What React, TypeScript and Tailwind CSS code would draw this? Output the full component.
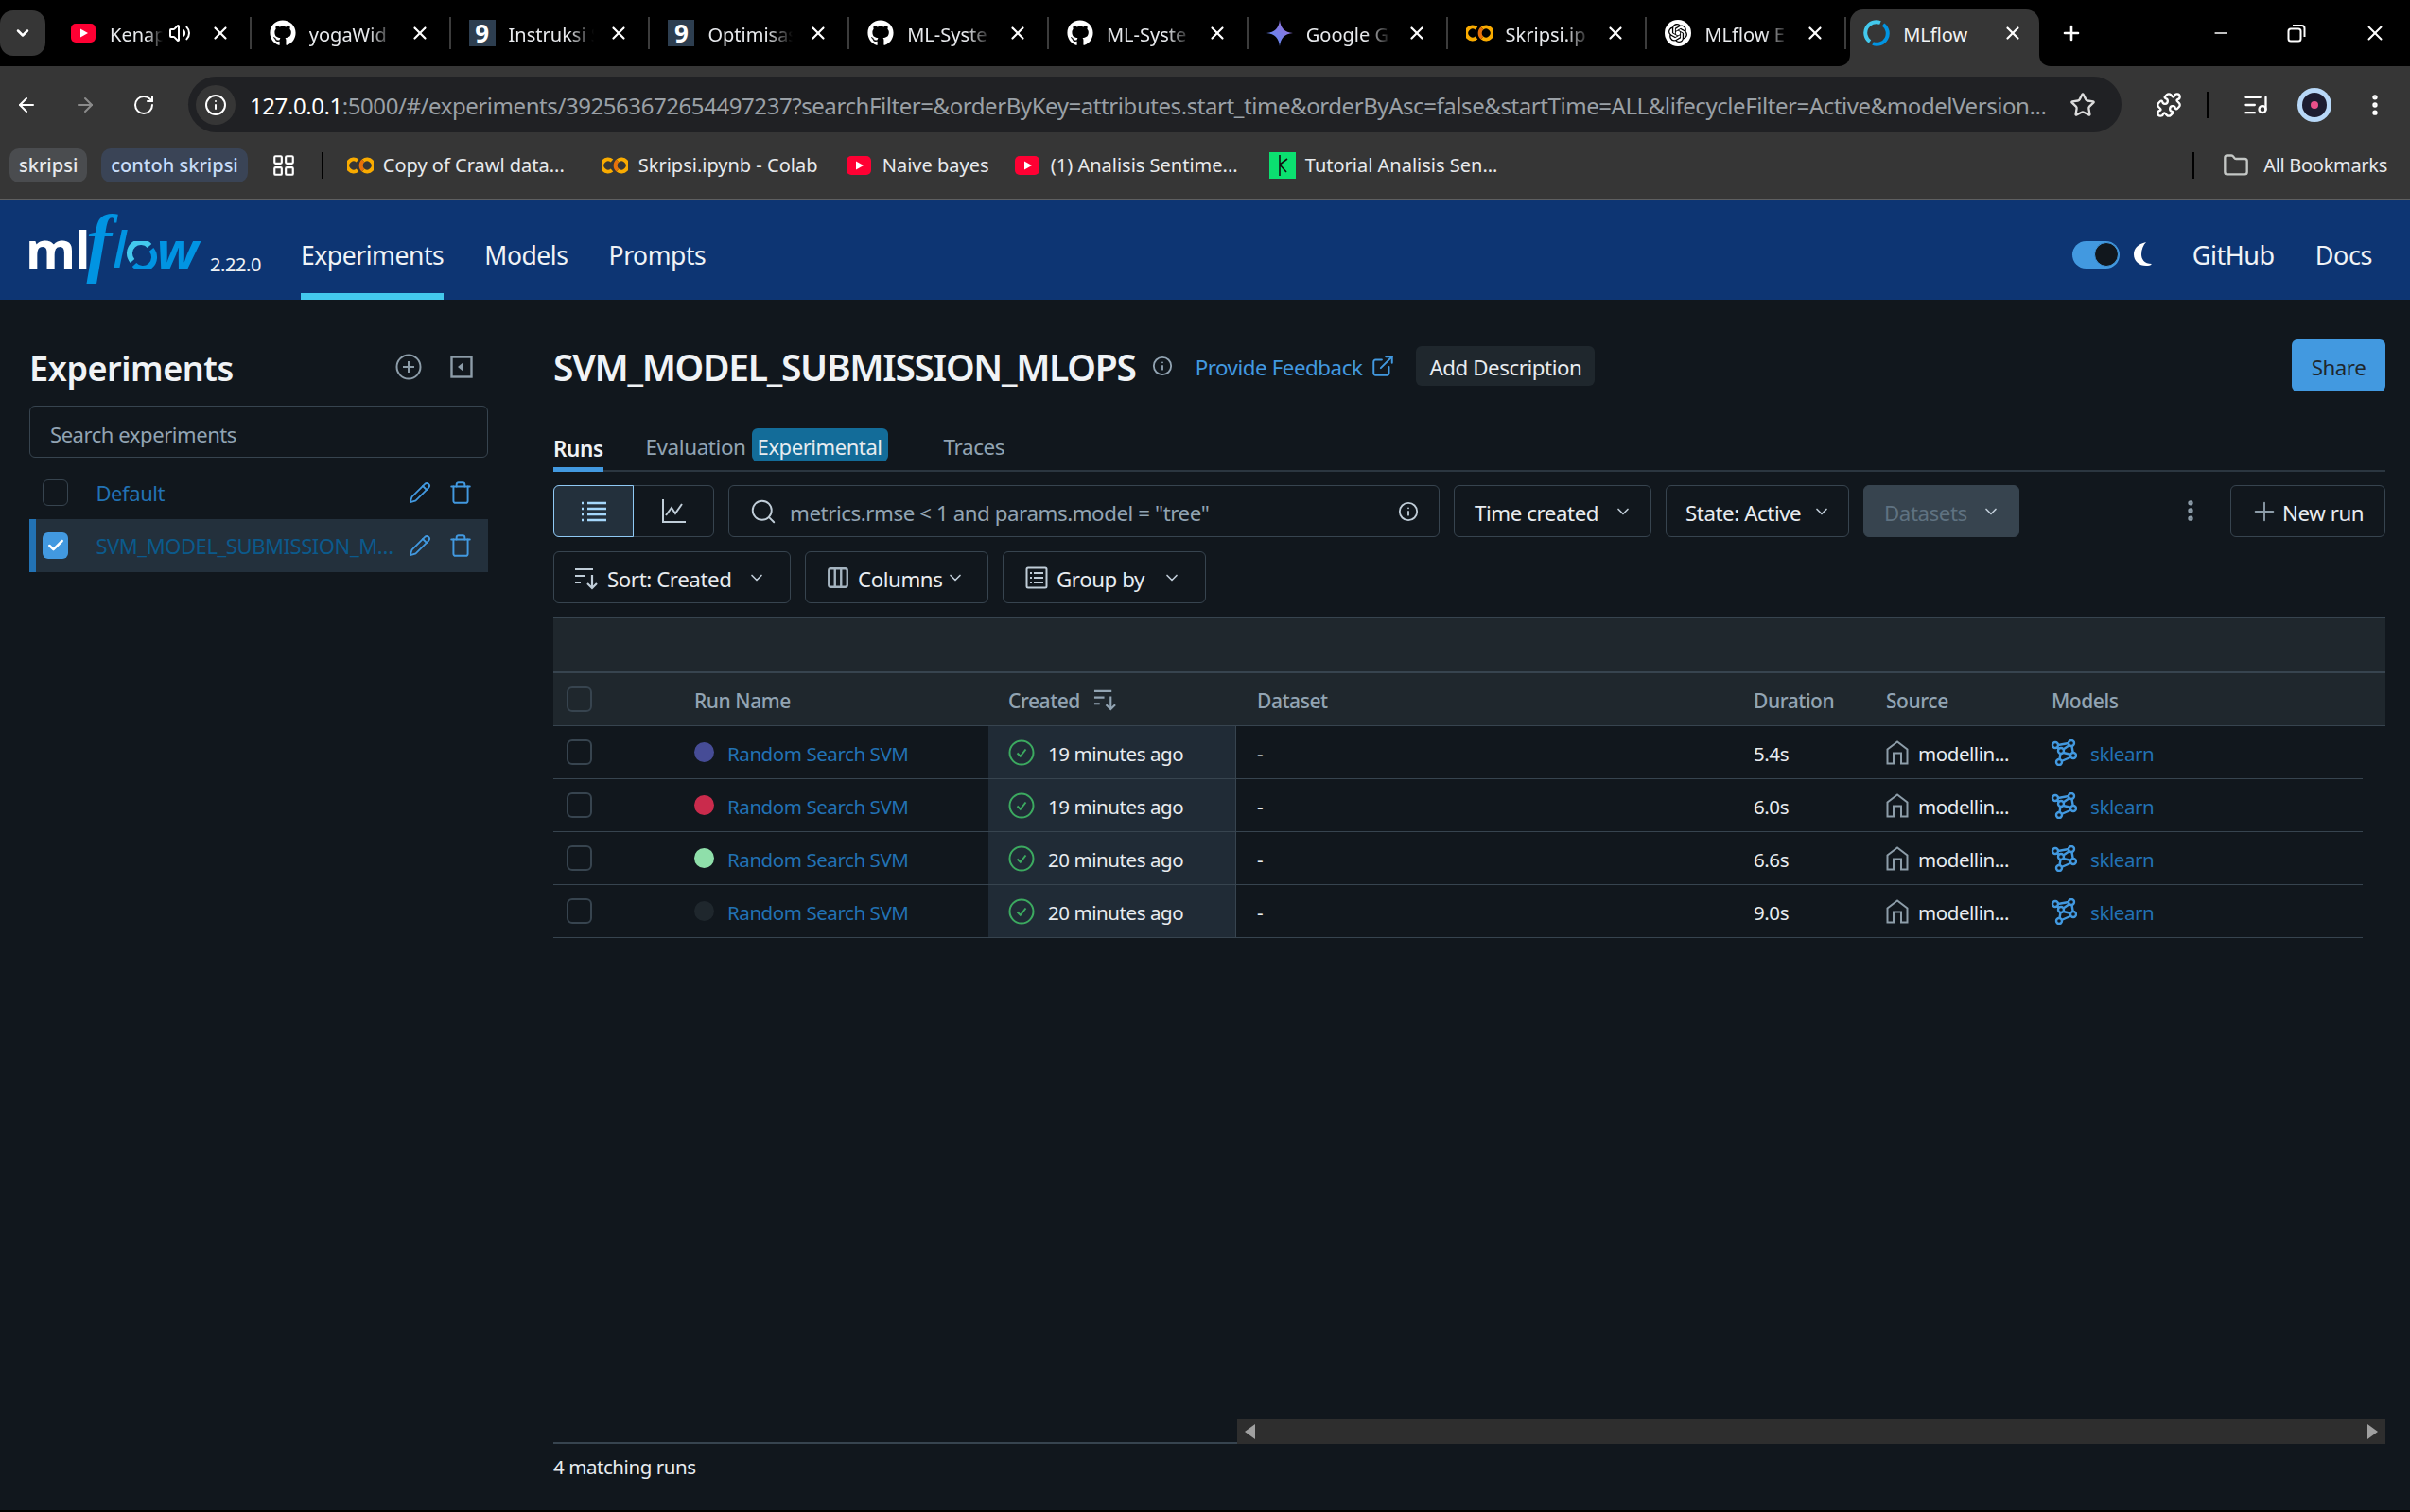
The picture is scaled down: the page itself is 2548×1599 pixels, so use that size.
import { ArrowLeft, ArrowRight, ChevronDown, Columns3, EllipsisVertical, ExternalLink, Folder, Info, Pencil, Plus, RotateCw, Search, Star, Trash, Volume2, X, Minus, Check, LayoutGrid, Puzzle, ListMusic } from 'lucide-react';
import type { ReactNode } from 'react';
import { FaGithub } from 'react-icons/fa';
import { SiOpenai } from 'react-icons/si';

function YoutubeIcon() {
  return (
    <svg viewBox="0 0 28 28" className="h-[28px] w-[28px] shrink-0">
      <rect x="1" y="4" width="26" height="20" rx="5" fill="#ff0033" />
      <path d="M11 9.5 L19 14 L11 18.5 Z" fill="#fff" />
    </svg>
  );
}

function ColabIcon() {
  return (
    <svg viewBox="0 0 28 18" className="h-[18px] w-[28px] shrink-0" fill="none" strokeWidth="4">
      <path d="M11 4 A6.5 6.5 0 1 0 11 14" stroke="#f9ab00" />
      <path d="M17 4 A6.5 6.5 0 1 1 17 14" stroke="#f9ab00" />
      <path d="M17 4 A6.5 6.5 0 0 0 17 14" stroke="#e8710a" />
    </svg>
  );
}

function DicodingIcon() {
  return <div className="flex h-[28px] w-[28px] shrink-0 items-center justify-center bg-[#2d3e50] text-[26px] font-bold leading-none tracking-normal text-white">9</div>;
}

function GeminiIcon() {
  return (
    <svg viewBox="0 0 28 28" className="h-[28px] w-[28px] shrink-0">
      <defs>
        <linearGradient id="gem" x1="0" y1="1" x2="1" y2="0">
          <stop offset="0" stopColor="#4f8df5" />
          <stop offset="1" stopColor="#a56cd6" />
        </linearGradient>
      </defs>
      <path d="M14 0 C15 9 19 13 28 14 C19 15 15 19 14 28 C13 19 9 15 0 14 C9 13 13 9 14 0 Z" fill="url(#gem)" />
    </svg>
  );
}

function MlflowFavicon() {
  return (
    <svg viewBox="0 0 28 28" className="h-[28px] w-[28px] shrink-0" fill="none" strokeWidth="4">
      <path d="M18 3 A11.5 11.5 0 0 0 7 23" stroke="#43c9ed" />
      <path d="M10 25 A11.5 11.5 0 0 0 21 5" stroke="#0194e2" />
    </svg>
  );
}

function ModelIcon() {
  return (
    <svg viewBox="0 0 28 28" className="h-[28px] w-[28px] shrink-0" fill="none" stroke="#4299e0" strokeWidth="2.4">
      <circle cx="5" cy="6" r="3" />
      <circle cx="22" cy="4" r="3" />
      <circle cx="24" cy="17" r="3" />
      <circle cx="9" cy="24" r="3" />
      <circle cx="11" cy="12" r="3" />
      <path d="M8 6 L19 4 M7 8.5 L9 10 M13.5 10.5 L20 6 M13.5 14 L22 16 M10.5 15 L9.5 21 M11.5 23 L22 18.5 M22.5 7 L23.7 14" />
    </svg>
  );
}

function HouseIcon() {
  return (
    <svg viewBox="0 0 24 26" className="h-[26px] w-[24px] shrink-0" fill="none" stroke="#8d9da9" strokeWidth="2">
      <path d="M1.5 24.5 V9.5 L12 1.5 L22.5 9.5 V24.5 H16 V13.5 H8 V24.5 Z" />
    </svg>
  );
}

function SortIcon({ className }: { className: string }) {
  return (
    <svg viewBox="0 0 26 26" className={className} fill="none" stroke="currentColor" strokeWidth="2.2">
      <path d="M1 4 H20 M1 11 H12 M1 18 H7 M19 10 V24 M14 19 L19 24 L24 19" />
    </svg>
  );
}

function GroupIcon() {
  return (
    <svg viewBox="0 0 24 24" className="h-[24px] w-[24px] shrink-0" fill="none" stroke="#c0cdd8" strokeWidth="2">
      <rect x="1.5" y="1.5" width="21" height="21" rx="1.5" />
      <path d="M5 7 H7 M9 7 H19 M5 12 H7 M9 12 H19 M5 17 H7 M9 17 H19" />
    </svg>
  );
}

function ListIcon() {
  return (
    <svg viewBox="0 0 28 24" className="h-[24px] w-[28px]" fill="none" stroke="#a5d7fb" strokeWidth="2.4">
      <path d="M1 3 H3 M7 3 H27 M1 9 H3 M7 9 H27 M1 15 H3 M7 15 H27 M1 21 H3 M7 21 H27" />
    </svg>
  );
}

function ChartIcon() {
  return (
    <svg viewBox="0 0 26 26" className="h-[26px] w-[26px]" fill="none" stroke="#c0cdd8" strokeWidth="2">
      <path d="M2 0 V24 H26 M5 17 L11 9 L15 15 L22 5" />
    </svg>
  );
}

function CollapseIcon() {
  return (
    <svg viewBox="0 0 24 24" className="h-[24px] w-[24px]" fill="none" stroke="#8d9da9" strokeWidth="2.4">
      <rect x="1.5" y="1.5" width="21" height="21" />
      <path d="M14 7 V17 L8 12 Z" fill="#8d9da9" stroke="none" />
    </svg>
  );
}

function StatusIcon() {
  return (
    <svg viewBox="0 0 28 28" className="h-[28px] w-[28px] shrink-0" fill="none" stroke="#3caa60" strokeWidth="2">
      <circle cx="14" cy="14" r="12.5" />
      <path d="M9.5 14.5 L12.8 17.8 L18.5 10.5" />
    </svg>
  );
}

function MoonIcon() {
  return (
    <svg viewBox="0 0 20 28" className="h-[28px] w-[20px]" fill="#fff">
      <path d="M14 1 C5 3 1 8 1 14 C1 21 7 27 16 26 C18 26 19 25 20 24 C12 24 9 19 9 14 C9 9 11 4 14 1 Z" />
    </svg>
  );
}

function RestoreIcon() {
  return (
    <svg viewBox="0 0 20 20" className="h-[20px] w-[20px]" fill="none" stroke="#fff" strokeWidth="2">
      <rect x="1.5" y="5.5" width="13" height="13" rx="2.5" />
      <path d="M6 2 H15.5 A3 3 0 0 1 18.5 5 V14" />
    </svg>
  );
}

function MlflowLogo() {
  return (
    <div className="ml-[-4px] flex h-[71px] w-[188px] items-end font-['Open_Sans'] leading-none tracking-normal">
      <span className="mb-[17px] text-[54px] font-bold leading-[40px] tracking-[-1px] text-white">ml</span>
      <span className="mb-[9px] ml-[-3px] font-['Liberation_Serif'] text-[80px] font-bold italic leading-[70px] text-[#0194e2]">f</span>
      <span className="mb-[17px] ml-[1px] text-[52px] font-semibold italic leading-[40px] text-[#0194e2]">l</span>
      <svg viewBox="0 0 30 30" className="mb-[15px] h-[30px] w-[34px] shrink-0" fill="none" strokeWidth="6">
        <path d="M5 21 A12 12 0 0 1 23 5" stroke="#43c9ed" />
        <path d="M25 9 A12 12 0 0 1 7 25" stroke="#0194e2" />
      </svg>
      <span className="mb-[17px] ml-[-2px] text-[56px] font-bold italic leading-[40px] text-[#0194e2]">w</span>
    </div>
  );
}

function BrowserTab({ icon, label, audio, active }: { icon: ReactNode; label: string; audio?: boolean; active?: boolean }) {
  if (active) {
    return (
      <div className="relative ml-[4px] flex h-[60px] w-[200px] items-center self-end rounded-t-[14px] bg-[#363636] pb-[10px] pl-[14px] pr-[17px]">
        <svg viewBox="0 0 12 12" className="absolute bottom-0 left-[-12px] h-[12px] w-[12px]" fill="#363636">
          <path d="M12 0 V12 H0 C7 12 12 7 12 0 Z" />
        </svg>
        <svg viewBox="0 0 12 12" className="absolute bottom-0 right-[-12px] h-[12px] w-[12px]" fill="#363636">
          <path d="M0 0 V12 H12 C5 12 0 7 0 0 Z" />
        </svg>
        {icon}
        <span className="ml-[14px] flex-1 truncate pt-[3px] text-[20px] text-[#f1f3f4]">{label}</span>
        <X className="h-[22px] w-[22px] text-white" strokeWidth={2.4} />
      </div>
    );
  }

  return (
    <div className="flex h-[34px] w-[210.8px] items-center border-r-2 border-[#3c3c3c] pl-[19px] pr-[20px]">
      {icon}
      <span className={audio ? "ml-[14px] w-[56px] shrink-0 overflow-hidden whitespace-nowrap pt-[3px] text-[20px] text-[#e8eaed] [mask-image:linear-gradient(to_right,black_70%,transparent)]" : "ml-[14px] w-[90px] shrink-0 overflow-hidden whitespace-nowrap pt-[3px] text-[20px] text-[#e8eaed] [mask-image:linear-gradient(to_right,black_70%,transparent)]"}>{label}</span>
      <div className="ml-auto flex items-center">
        {audio ? <Volume2 className="mr-[20px] h-[24px] w-[24px] shrink-0 text-white" /> : null}
        <X className="h-[22px] w-[22px] shrink-0 text-white" strokeWidth={2.4} />
      </div>
    </div>
  );
}

function BrowserChrome() {
  return (
    <div className="font-['Noto_Sans'] tracking-normal">
      <div className="flex h-[70px] items-center bg-black">
        <div className="flex h-[48px] w-[48px] shrink-0 items-center justify-center rounded-[14px] bg-[#363636]">
          <ChevronDown className="h-[20px] w-[20px] text-white" strokeWidth={3} />
        </div>
        <div className="ml-[7px] flex h-full items-center">
          <BrowserTab icon={<YoutubeIcon />} label="Kenap" audio />
          <BrowserTab icon={<FaGithub className="h-[28px] w-[28px] shrink-0 text-white" />} label="yogaWid" />
          <BrowserTab icon={<DicodingIcon />} label="Instruksi S" />
          <BrowserTab icon={<DicodingIcon />} label="Optimisas" />
          <BrowserTab icon={<FaGithub className="h-[28px] w-[28px] shrink-0 text-white" />} label="ML-Syste" />
          <BrowserTab icon={<FaGithub className="h-[28px] w-[28px] shrink-0 text-white" />} label="ML-Syste" />
          <BrowserTab icon={<GeminiIcon />} label="Google G" />
          <BrowserTab icon={<ColabIcon />} label="Skripsi.ip" />
          <BrowserTab
            icon={
              <div className="flex h-[28px] w-[28px] shrink-0 items-center justify-center rounded-full bg-white">
                <SiOpenai className="h-[20px] w-[20px] text-black" />
              </div>
            }
            label="MLflow E"
          />
          <BrowserTab icon={<MlflowFavicon />} label="MLflow" active />
        </div>
        <Plus className="ml-[22px] h-[24px] w-[24px] text-white" strokeWidth={2.6} />
        <div className="ml-auto flex items-center gap-[60px] pr-[24px]">
          <Minus className="h-[20px] w-[20px] text-white" />
          <RestoreIcon />
          <X className="h-[26px] w-[26px] text-white" strokeWidth={1.8} />
        </div>
      </div>

      <div className="flex h-[70px] items-center bg-[#363636] pl-[16px] pt-[11px]">
        <ArrowLeft className="h-[24px] w-[24px] text-white" />
        <ArrowRight className="ml-[38px] h-[24px] w-[24px] text-[#8b8b8b]" />
        <RotateCw className="ml-[38px] h-[24px] w-[24px] text-white" />
        <div className="ml-[35px] flex h-[59px] w-[2044px] items-center rounded-full bg-[#202124] pl-[8px] pr-[27px]">
          <div className="flex h-[42px] w-[42px] items-center justify-center rounded-full bg-[#363636]">
            <Info className="h-[24px] w-[24px] text-white" />
          </div>
          <div className="ml-[15px] flex-1 overflow-hidden whitespace-nowrap pt-[2px] text-[24px] tracking-[-0.018em] text-[#9aa0a6]">
            <span className="text-white">127.0.0.1</span>:5000/#/experiments/392563672654497237?searchFilter=&orderByKey=attributes.start_time&orderByAsc=false&startTime=ALL&lifecycleFilter=Active&modelVersion...
          </div>
          <Star className="ml-[16px] h-[28px] w-[28px] shrink-0 text-[#dcdcdc]" />
        </div>
        <Puzzle className="ml-[36px] h-[28px] w-[28px] text-white" />
        <div className="ml-[26px] h-[28px] w-[2px] bg-black" />
        <ListMusic className="ml-[36px] h-[28px] w-[28px] text-white" />
        <div className="ml-[30px] flex h-[36px] w-[36px] items-center justify-center rounded-full bg-[#b8d8f8]">
          <div className="flex h-[26px] w-[26px] items-center justify-center rounded-full bg-[#1c1c30]">
            <div className="h-[8px] w-[8px] rounded-full bg-[#e8508a]" />
          </div>
        </div>
        <EllipsisVertical className="ml-[32px] h-[28px] w-[28px] text-white" strokeWidth={2.6} />
      </div>

      <div className="flex h-[72px] items-center border-b-2 border-[#5f5f5f] bg-[#363636] pl-[10px] text-[20px] text-[#e8eaed]">
        <div className="rounded-[10px] bg-[#4a4c4f] px-[10px] py-[3px] font-medium text-[#e8eaed]">skripsi</div>
        <div className="ml-[15px] rounded-[10px] bg-[#3a4456] px-[10px] py-[3px] font-medium text-[#c8dcf8]">contoh skripsi</div>
        <LayoutGrid className="ml-[25px] h-[26px] w-[26px] text-white" />
        <div className="ml-[27px] h-[28px] w-[2px] bg-black" />
        <div className="ml-[25px]"><ColabIcon /></div>
        <span className="ml-[10px] w-[192px] whitespace-nowrap">Copy of Crawl data...</span>
        <div className="ml-[39px]"><ColabIcon /></div>
        <span className="ml-[11px] w-[190px] whitespace-nowrap">Skripsi.ipynb - Colab</span>
        <div className="ml-[29px]"><YoutubeIcon /></div>
        <span className="ml-[11px] w-[111px] whitespace-nowrap">Naive bayes</span>
        <div className="ml-[28px]"><YoutubeIcon /></div>
        <span className="ml-[11px] w-[195px] whitespace-nowrap">(1) Analisis Sentime...</span>
        <div className="ml-[36px] flex h-[28px] w-[28px] items-center justify-center bg-[#0be070]">
          <svg viewBox="0 0 20 24" className="h-[24px] w-[20px]" fill="none" stroke="#111" strokeWidth="1.6">
            <path d="M7 1 V23 M7 11 L15 5 M7 11 L14 19" />
          </svg>
        </div>
        <span className="ml-[10px] w-[201px] whitespace-nowrap">Tutorial Analisis Sen...</span>
        <div className="ml-auto flex items-center pr-[24px]">
          <div className="h-[28px] w-[2px] bg-black" />
          <Folder className="ml-[30px] h-[28px] w-[28px] text-[#c4c7c5]" />
          <span className="ml-[15px] whitespace-nowrap tracking-[-0.015em]">All Bookmarks</span>
        </div>
      </div>
    </div>
  );
}

function AppHeader() {
  return (
    <header className="flex h-[105px] bg-[#0d3573] pl-[31px] pr-[40px] text-[#f0f3f6]">
      <div className="flex items-start pt-[17px]">
        <MlflowLogo />
        <span className="ml-[7px] mt-[41px] text-[20px] leading-none">2.22.0</span>
      </div>
      <nav className="ml-[42px] flex gap-[43px] text-[26.5px]">
        <div className="flex items-center border-b-[7px] border-[#43c9ed] pt-[19px]">Experiments</div>
        <div className="flex items-center border-b-[7px] border-transparent pt-[19px]">Models</div>
        <div className="flex items-center border-b-[7px] border-transparent pt-[19px]">Prompts</div>
      </nav>
      <div className="ml-auto flex items-center pt-[9px] text-[27px]">
        <div className="flex h-[29px] w-[50px] items-center justify-end rounded-full bg-[#4299e0] pr-[1px]">
          <div className="h-[26px] w-[26px] rounded-full border border-[#4299e0] bg-[#11171d]" />
        </div>
        <div className="ml-[14px]"><MoonIcon /></div>
        <span className="ml-[43px] pt-[3px]">GitHub</span>
        <span className="ml-[43px] pt-[3px]">Docs</span>
      </div>
    </header>
  );
}

function ExperimentRow({ name, selected }: { name: string; selected?: boolean }) {
  return (
    <div className={selected ? 'flex h-[56px] items-center border-l-[7px] border-[#2272b4] bg-[#23303c] pl-[7px] pr-[16px]' : 'flex h-[56px] items-center pl-[14px] pr-[16px]'}>
      {selected ? (
        <div className="flex h-[28px] w-[28px] items-center justify-center rounded-[6px] bg-[#4299e0]">
          <Check className="h-[20px] w-[20px] text-white" strokeWidth={3} />
        </div>
      ) : (
        <div className="h-[28px] w-[28px] rounded-[6px] border border-[#37444f]" />
      )}
      <span className={selected ? 'ml-[29px] w-[322px] truncate pt-[1px] text-[22px] text-[#0b5a8c]' : 'ml-[29px] w-[322px] truncate pt-[1px] text-[22px] text-[#2272b4]'}>{name}</span>
      <Pencil className="ml-[15px] h-[24px] w-[24px] shrink-0 text-[#4299e0]" strokeWidth={1.8} />
      <Trash className="ml-[18px] h-[26px] w-[26px] shrink-0 text-[#4299e0]" strokeWidth={1.8} />
    </div>
  );
}

function Sidebar() {
  return (
    <aside className="w-[585px] shrink-0 pl-[31px] pt-[50px]">
      <div className="w-[485px]">
        <div className="flex h-[46px] items-center justify-between pr-[16px]">
          <h2 className="text-[36px] font-semibold leading-none text-[#f0f3f6]">Experiments</h2>
          <div className="mt-[-4px] flex items-center gap-[30px]">
            <svg viewBox="0 0 28 28" className="h-[28px] w-[28px]" fill="none" stroke="#8d9da9" strokeWidth="2">
              <circle cx="14" cy="14" r="12.5" />
              <path d="M14 8 V20 M8 14 H20" />
            </svg>
            <CollapseIcon />
          </div>
        </div>
        <div className="mt-[16px] flex h-[55px] items-center rounded-[6px] border border-[#37444f] pl-[21px] text-[22px] text-[#92a4b3]">
          <span className="pt-[5px]">Search experiments</span>
        </div>
        <div className="mt-[9px]">
          <ExperimentRow name="Default" />
          <ExperimentRow name="SVM_MODEL_SUBMISSION_MLOPS" selected />
        </div>
      </div>
    </aside>
  );
}

function FilterButton({ children, className }: { children: ReactNode; className: string }) {
  return <div className={`flex h-[55px] items-center rounded-[6px] border border-[#37444f] text-[22.3px] ${className}`}>{children}</div>;
}

function Toolbar() {
  return (
    <>
      <div className="mt-[14px] flex">
        <div className="flex h-[55px] w-[170px] rounded-[6px] border border-[#37444f]">
          <div className="ml-[-1px] mt-[-1px] flex h-[55px] w-[85px] items-center justify-center rounded-l-[6px] border border-[#8fc9f5] bg-[#23303c]">
            <ListIcon />
          </div>
          <div className="flex flex-1 items-center justify-center">
            <ChartIcon />
          </div>
        </div>
        <FilterButton className="ml-[15px] w-[752px] px-[21px] text-[#92a4b3]">
          <Search className="h-[30px] w-[30px] shrink-0 text-[#c0cdd8]" strokeWidth={1.5} />
          <span className="ml-[13px] pt-[5px]">metrics.rmse &lt; 1 and params.model = "tree"</span>
          <Info className="ml-auto h-[22px] w-[22px] text-[#c0cdd8]" strokeWidth={2} />
        </FilterButton>
        <FilterButton className="ml-[15px] w-[209px] pl-[21px] text-[#e8ecf0]">
          <span className="pt-[5px]">Time created</span>
          <ChevronDown className="ml-[16px] h-[20px] w-[20px] text-[#c0cdd8]" />
        </FilterButton>
        <FilterButton className="ml-[15px] w-[194px] pl-[20px] text-[#e8ecf0]">
          <span className="pt-[5px]">State: Active</span>
          <ChevronDown className="ml-[12px] h-[20px] w-[20px] text-[#c0cdd8]" />
        </FilterButton>
        <FilterButton className="ml-[15px] w-[165px] bg-[#37444f] pl-[21px] text-[#5f7281]">
          <span className="pt-[5px]">Datasets</span>
          <ChevronDown className="ml-[15px] h-[20px] w-[20px] text-[#c0cdd8]" />
        </FilterButton>
        <EllipsisVertical className="ml-[167px] mt-[13px] h-[28px] w-[28px] text-[#8d9da9]" strokeWidth={2.6} />
        <FilterButton className="ml-[28px] w-[164px] pl-[19px] text-[#e8ecf0]">
          <Plus className="h-[32px] w-[32px] shrink-0 text-[#8d9da9]" strokeWidth={1.4} />
          <span className="ml-[3px] whitespace-nowrap pt-[5px]">New run</span>
        </FilterButton>
      </div>

      <div className="mt-[15px] flex text-[#e8ecf0]">
        <FilterButton className="w-[251px] pl-[21px]">
          <SortIcon className="h-[26px] w-[26px] shrink-0 text-[#c0cdd8]" />
          <span className="ml-[9px] whitespace-nowrap pt-[5px]">Sort: Created</span>
          <ChevronDown className="ml-[17px] h-[20px] w-[20px] text-[#c0cdd8]" />
        </FilterButton>
        <FilterButton className="ml-[15px] w-[194px] pl-[21px]">
          <Columns3 className="h-[26px] w-[26px] shrink-0 text-[#a5b4c0]" strokeWidth={2.2} />
          <span className="ml-[8px] pt-[5px]">Columns</span>
          <ChevronDown className="ml-[4px] h-[20px] w-[20px] text-[#c0cdd8]" />
        </FilterButton>
        <FilterButton className="ml-[15px] w-[215px] pl-[23px]">
          <GroupIcon />
          <span className="ml-[9px] whitespace-nowrap pt-[5px]">Group by</span>
          <ChevronDown className="ml-[19px] h-[20px] w-[20px] text-[#c0cdd8]" />
        </FilterButton>
      </div>
    </>
  );
}

const RUNS = [
  { color: 'bg-[#464c96]', created: '19 minutes ago', duration: '5.4s' },
  { color: 'bg-[#ca2b4c]', created: '19 minutes ago', duration: '6.0s' },
  { color: 'bg-[#8fdfaa]', created: '20 minutes ago', duration: '6.6s' },
  { color: 'bg-[#1f272d]', created: '20 minutes ago', duration: '9.0s' },
];

const GRID = 'grid grid-cols-[149px_311px_262px_526px_140px_175px_1fr] items-center';

function RunsTable() {
  return (
    <div className="mt-[15px]">
      <div className="h-[59px] border-y border-b-[2px] border-[#37444f] bg-[#1f272d]" />
      <div className={`${GRID} h-[56px] border-b border-[#37444f] bg-[#1f272d] text-[21px] font-medium text-[#92a4b3]`}>
        <div className="pl-[14px]">
          <div className="h-[27px] w-[27px] rounded-[6px] border-2 border-[#37444f]" />
        </div>
        <span className="pt-[4px]">Run Name</span>
        <div className="flex items-center pl-[21px]">
          <span className="pt-[4px]">Created</span>
          <SortIcon className="ml-[14px] h-[25px] w-[25px] text-[#92a4b3]" />
        </div>
        <span className="pl-[22px] pt-[4px]">Dataset</span>
        <span className="pl-[21px] pt-[4px]">Duration</span>
        <span className="pl-[21px] pt-[4px]">Source</span>
        <span className="pl-[21px] pt-[4px]">Models</span>
      </div>
      {RUNS.map((run, index) => (
        <div key={index} className={`${GRID} h-[56px] w-[1913px] border-b border-[#37444f] text-[20.5px] text-[#e8ecf0]`}>
          <div className="pl-[14px]">
            <div className="h-[27px] w-[27px] rounded-[6px] border-2 border-[#37444f]" />
          </div>
          <div className="flex items-center">
            <div className={`h-[21px] w-[21px] rounded-full ${run.color}`} />
            <span className="ml-[14px] pt-[4px] text-[#2272b4]">Random Search SVM</span>
          </div>
          <div className="flex h-full items-center border-r border-[#37444f] bg-[#202b36] pl-[21px]">
            <StatusIcon />
            <span className="ml-[14px] pt-[4px]">{run.created}</span>
          </div>
          <span className="pl-[22px] pt-[4px]">-</span>
          <span className="pl-[21px] pt-[4px]">{run.duration}</span>
          <div className="flex items-center pl-[21px]">
            <HouseIcon />
            <span className="ml-[10px] pt-[4px]">modellin...</span>
          </div>
          <div className="flex items-center pl-[20px]">
            <ModelIcon />
            <span className="ml-[14px] pt-[4px] text-[#2272b4]">sklearn</span>
          </div>
        </div>
      ))}
    </div>
  );
}

function MainContent() {
  return (
    <main className="flex w-[1937px] flex-col pt-[42px]">
      <div className="flex h-[55px] items-center">
        <h1 className="pt-[2px] text-[39px] font-semibold leading-none tracking-[-0.033em] text-[#f0f3f6]">SVM_MODEL_SUBMISSION_MLOPS</h1>
        <Info className="ml-[17px] h-[22px] w-[22px] text-[#92a4b3]" />
        <span className="ml-[24px] pt-[5px] text-[22.3px] text-[#4299e0]">Provide Feedback</span>
        <ExternalLink className="ml-[9px] h-[26px] w-[26px] text-[#4299e0]" strokeWidth={1.8} />
        <div className="ml-[22px] flex h-[42px] w-[189px] items-center justify-center rounded-[6px] bg-[#1f272d] pt-[5px] text-[22.3px] text-[#e8ecf0]">Add Description</div>
        <div className="ml-auto flex h-[55px] w-[99px] items-center justify-center rounded-[6px] bg-[#4299e0] pt-[5px] text-[22.3px] text-[#1f272d]">Share</div>
      </div>

      <div className="flex h-[85px] items-end border-b-2 border-[#2b3640] text-[22.5px] text-[#92a4b3]">
        <div className="mb-[-2px] flex h-[43px] items-start border-b-[5px] border-[#4299e0] pt-[2px] font-semibold text-[#f0f3f6]">Runs</div>
        <div className="ml-[45px] flex h-[43px] items-start pt-[2px]">Evaluation</div>
        <div className="mb-[9px] ml-[6px] flex h-[35px] w-[144px] items-center justify-center rounded-[6px] bg-[#136c99] pt-[3px] text-[22px] text-[#e8ecf0]">Experimental</div>
        <div className="ml-[59px] flex h-[43px] items-start pt-[2px]">Traces</div>
      </div>

      <Toolbar />
      <RunsTable />

      <div className="relative mt-auto h-[72px] border-t-2 border-[#37444f] pt-[9px] text-[20.5px] text-[#e8ecf0]">
        <div className="absolute right-0 top-[-26px] flex h-[26px] w-[1214px] items-center justify-between bg-[#2e2e2e] px-[8px]">
          <div className="h-0 w-0 border-y-[8px] border-r-[11px] border-y-transparent border-r-[#a0a0a0]" />
          <div className="h-0 w-0 border-y-[8px] border-l-[11px] border-y-transparent border-l-[#a0a0a0]" />
        </div>
        4 matching runs
      </div>
    </main>
  );
}

export default function App() {
  return (
    <div className="flex h-[1599px] w-[2548px] flex-col overflow-hidden border-b-2 border-black bg-[#11171d] font-['Noto_Sans',sans-serif] tracking-[-0.027em]">
      <BrowserChrome />
      <AppHeader />
      <div className="flex min-h-0 flex-1">
        <Sidebar />
        <MainContent />
      </div>
    </div>
  );
}
